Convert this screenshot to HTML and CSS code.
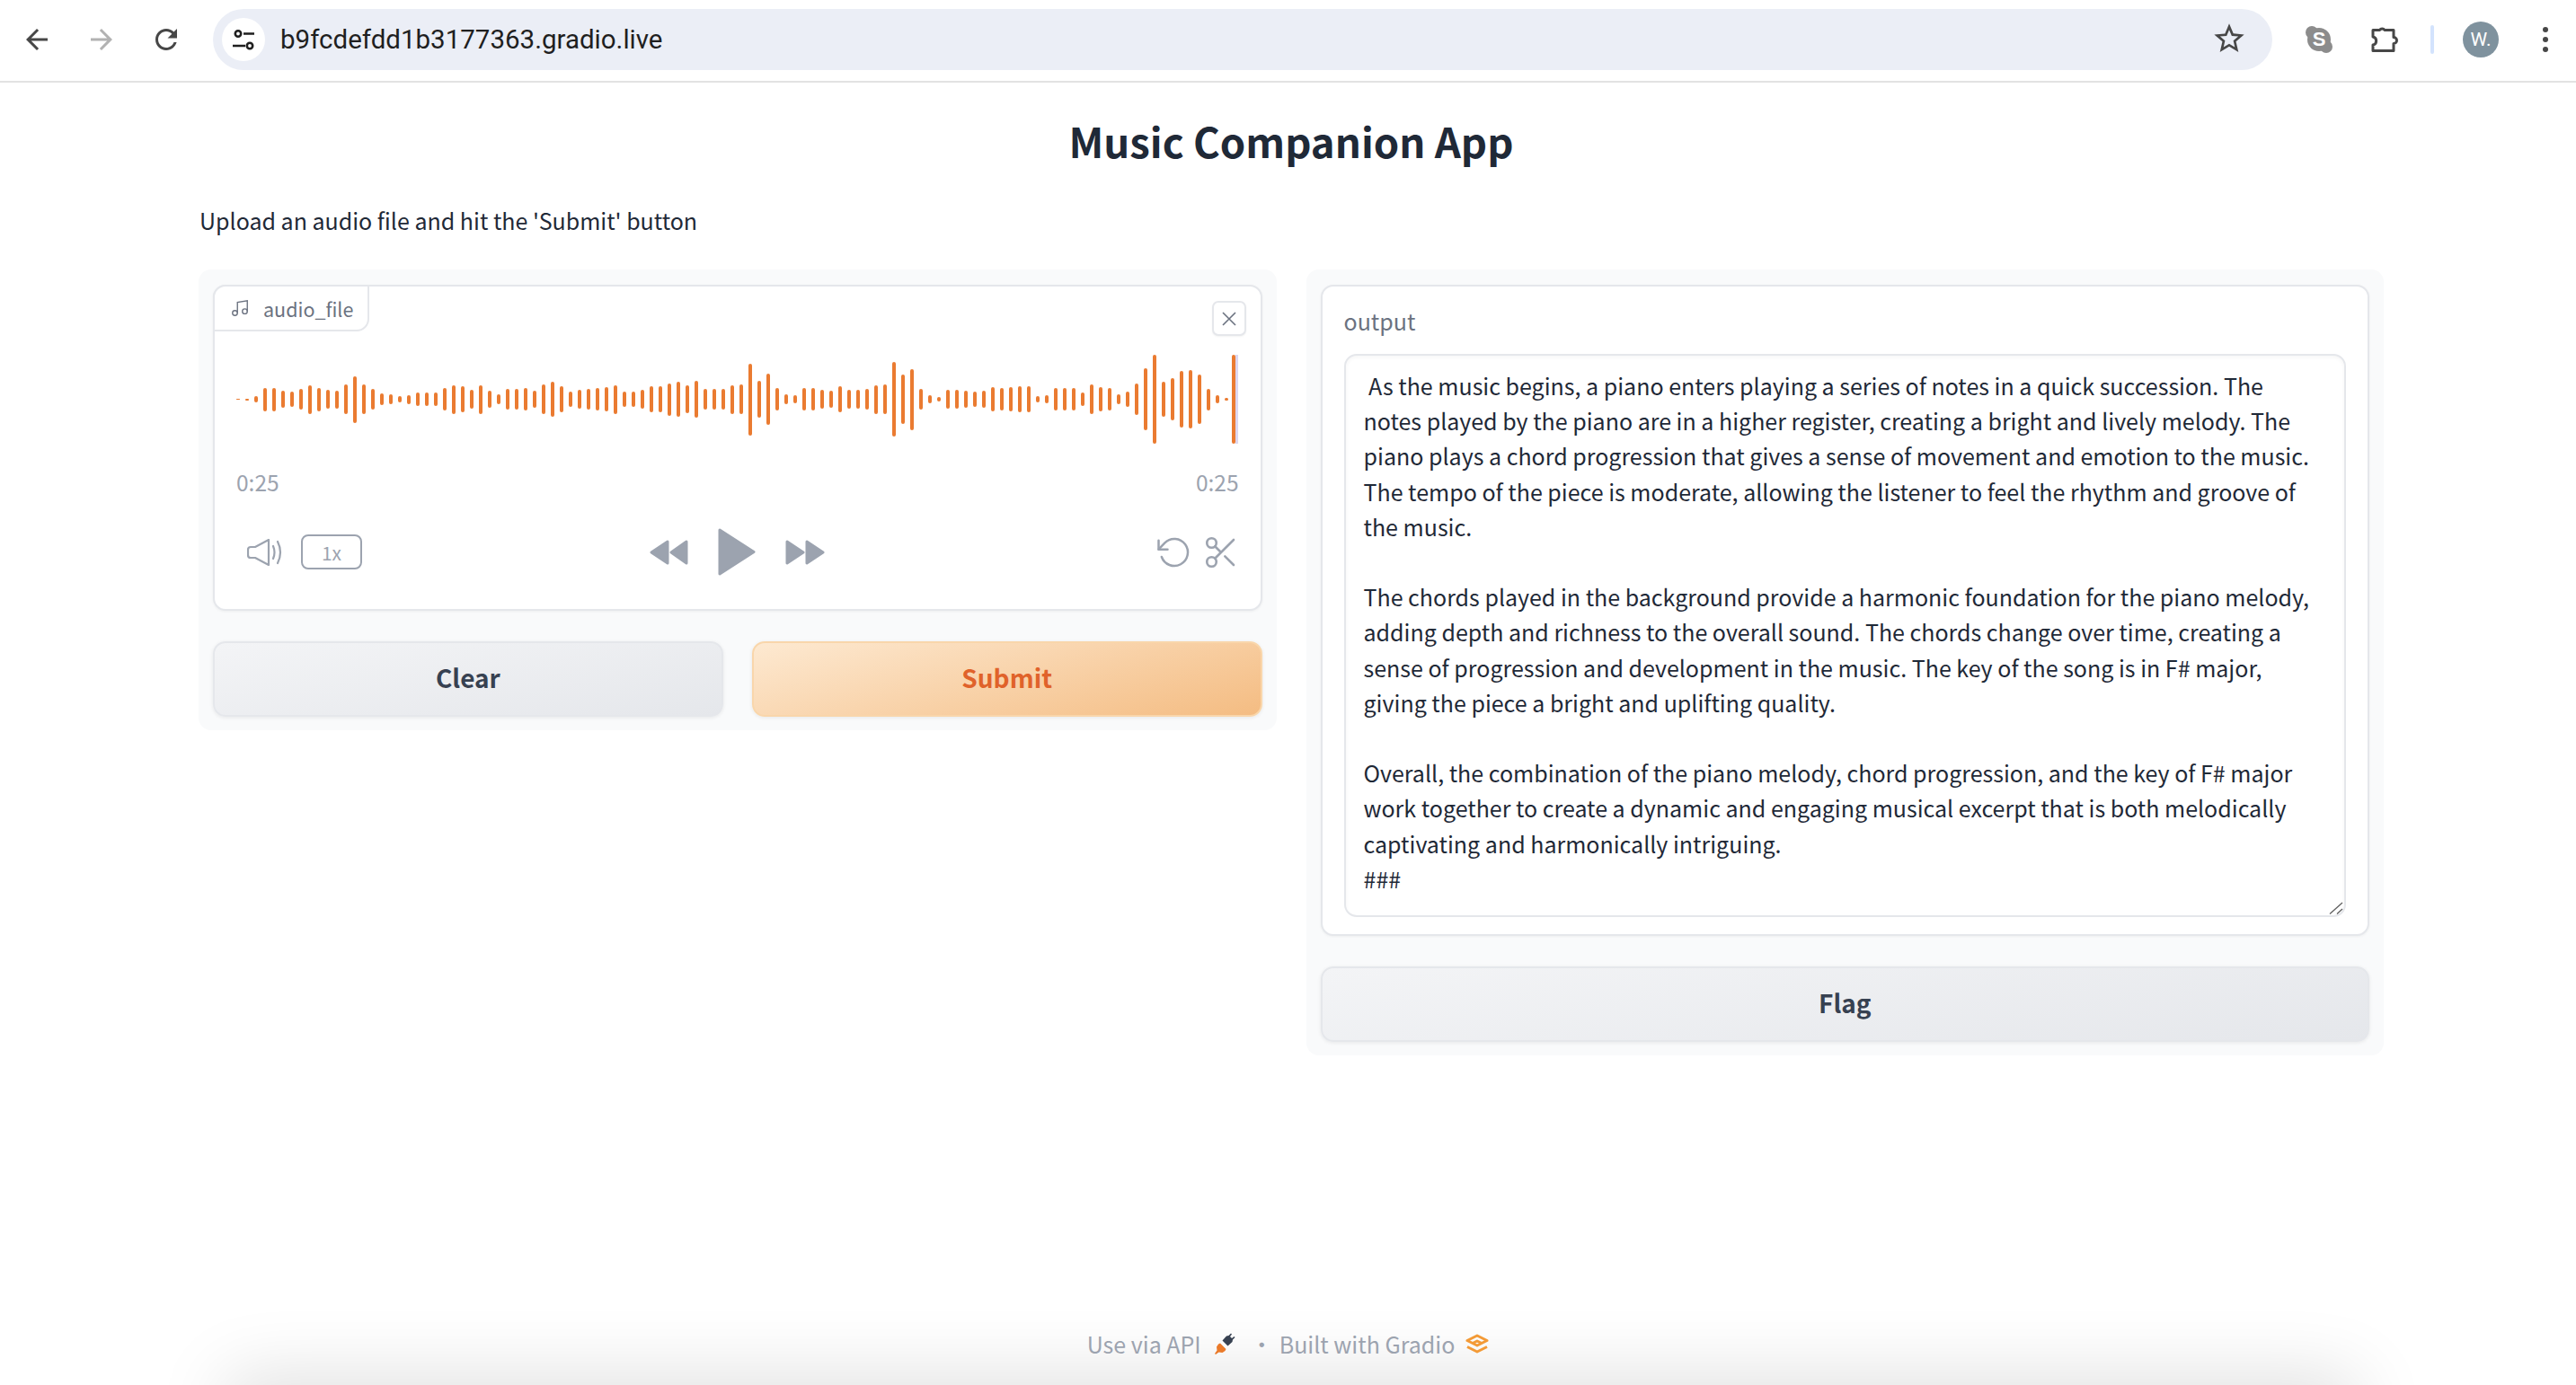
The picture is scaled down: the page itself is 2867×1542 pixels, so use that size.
FILE: index.html
```html
<!DOCTYPE html>
<html lang="en">
<head>
<meta charset="utf-8">
<title>Music Companion App</title>
<link rel="stylesheet" href="styles.css">
</head>
<body>
<header class="toolbar">
  <div class="nav">
    <svg class="nav-icon" viewBox="0 0 24 24"><path d="M20 11H7.83l5.59-5.59L12 4l-8 8 8 8 1.41-1.41L7.83 13H20v-2z"/></svg>
    <svg class="nav-icon disabled" viewBox="0 0 24 24"><path d="M4 11h12.17l-5.59-5.59L12 4l8 8-8 8-1.41-1.41L16.17 13H4v-2z"/></svg>
    <svg class="nav-icon" viewBox="0 0 24 24"><path d="M17.65 6.35C16.2 4.9 14.21 4 12 4c-4.42 0-7.99 3.58-7.99 8s3.57 8 7.99 8c3.73 0 6.84-2.55 7.73-6h-2.08c-.82 2.33-3.04 4-5.65 4-3.31 0-6-2.69-6-6s2.69-6 6-6c1.66 0 3.14.69 4.22 1.78L13 11h7V4l-2.35 2.35z"/></svg>
  </div>
  <div class="omnibox">
    <span class="site-info">
      <svg width="28" height="28" viewBox="0 0 28 28" fill="none" stroke="#1f1f1f" stroke-width="2.6"><circle cx="8" cy="7.5" r="3.2"/><path d="M14 7.5h12M2 21h14"/><circle cx="21" cy="21" r="3.2"/></svg>
    </span>
    <span class="url">b9fcdefdd1b3177363.gradio.live</span>
    <svg class="star" viewBox="0 0 24 24"><path d="M22 9.24l-7.19-.62L12 2 9.19 8.63 2 9.24l5.46 4.73L5.82 21 12 17.27 18.18 21l-1.63-7.03L22 9.24zM12 15.4l-3.76 2.27 1-4.28-3.32-2.88 4.38-.38L12 6.1l1.71 4.04 4.38.38-3.32 2.88 1 4.28L12 15.4z"/></svg>
  </div>
  <div class="extras">
    <svg class="skype" viewBox="0 0 32 32"><circle cx="16" cy="16" r="13"/><circle cx="8" cy="8" r="7"/><circle cx="24" cy="24" r="7"/><text x="16" y="23" text-anchor="middle">S</text></svg>
    <svg class="puzzle" viewBox="0 0 34 34" fill="none"><path d="M4 6.5h7.5a3.2 3.2 0 0 1 5.5 0H27v8a3.5 3.5 0 0 1 0 7v8H4v-6.5a4.6 4.6 0 0 0 0-9z"/></svg>
    <span class="divider"></span>
    <span class="avatar">W.</span>
    <span class="dots"><i></i><i></i><i></i></span>
  </div>
</header>

<main class="page">
  <h1 class="title">Music Companion App</h1>
  <p class="intro">Upload an audio file and hit the 'Submit' button</p>
  <div class="columns">
    <section class="panel">
      <div class="card audio">
        <div class="tab">
          <svg class="tab-icon" viewBox="0 0 24 24" fill="none"><path d="M9 18V5l12-2v13"/><circle cx="6" cy="18" r="3"/><circle cx="18" cy="16" r="3"/></svg>
          <span>audio_file</span>
        </div>
        <button class="close" type="button" aria-label="Clear">
          <svg width="16" height="16" viewBox="0 0 16 16" fill="none"><path d="M1 1l14 14M15 1L1 15"/></svg>
        </button>
        <div class="wave">
          <i style="height:1px"></i><i style="height:2px"></i><i style="height:7px"></i><i style="height:26px"></i><i style="height:26px"></i><i style="height:19px"></i><i style="height:17px"></i><i style="height:23px"></i><i style="height:32px"></i><i style="height:26px"></i><i style="height:21px"></i><i style="height:20px"></i><i style="height:33px"></i><i style="height:52px"></i><i style="height:33px"></i><i style="height:23px"></i><i style="height:13px"></i><i style="height:11px"></i><i style="height:7px"></i><i style="height:10px"></i><i style="height:15px"></i><i style="height:15px"></i><i style="height:15px"></i><i style="height:25px"></i><i style="height:32px"></i><i style="height:29px"></i><i style="height:21px"></i><i style="height:32px"></i><i style="height:19px"></i><i style="height:11px"></i><i style="height:23px"></i><i style="height:23px"></i><i style="height:25px"></i><i style="height:19px"></i><i style="height:33px"></i><i style="height:39px"></i><i style="height:29px"></i><i style="height:17px"></i><i style="height:21px"></i><i style="height:23px"></i><i style="height:25px"></i><i style="height:27px"></i><i style="height:32px"></i><i style="height:17px"></i><i style="height:17px"></i><i style="height:21px"></i><i style="height:29px"></i><i style="height:29px"></i><i style="height:36px"></i><i style="height:39px"></i><i style="height:31px"></i><i style="height:41px"></i><i style="height:23px"></i><i style="height:23px"></i><i style="height:23px"></i><i style="height:32px"></i><i style="height:33px"></i><i style="height:80px"></i><i style="height:41px"></i><i style="height:57px"></i><i style="height:25px"></i><i style="height:11px"></i><i style="height:9px"></i><i style="height:25px"></i><i style="height:25px"></i><i style="height:21px"></i><i style="height:19px"></i><i style="height:29px"></i><i style="height:21px"></i><i style="height:21px"></i><i style="height:23px"></i><i style="height:32px"></i><i style="height:33px"></i><i style="height:83px"></i><i style="height:55px"></i><i style="height:68px"></i><i style="height:23px"></i><i style="height:9px"></i><i style="height:5px"></i><i style="height:21px"></i><i style="height:21px"></i><i style="height:19px"></i><i style="height:17px"></i><i style="height:19px"></i><i style="height:27px"></i><i style="height:25px"></i><i style="height:27px"></i><i style="height:29px"></i><i style="height:29px"></i><i style="height:7px"></i><i style="height:9px"></i><i style="height:25px"></i><i style="height:25px"></i><i style="height:25px"></i><i style="height:15px"></i><i style="height:33px"></i><i style="height:27px"></i><i style="height:25px"></i><i style="height:11px"></i><i style="height:17px"></i><i style="height:35px"></i><i style="height:69px"></i><i style="height:99px"></i><i style="height:39px"></i><i style="height:47px"></i><i style="height:63px"></i><i style="height:65px"></i><i style="height:55px"></i><i style="height:24px"></i><i style="height:9px"></i><i style="height:3px"></i><i class="end" style="height:99px"></i><b class="cursor"></b>
        </div>
        <div class="times"><span>0:25</span><span>0:25</span></div>
        <div class="controls">
          <div class="ctl-left">
            <svg class="volume" width="40" height="30" viewBox="0 0 40 30" fill="none"><path d="M1 12v6q0 3 3 3h5l15 8V1L9 9H4q-3 0-3 3z"/><path d="M29 8q3 7 0 14"/><path d="M34 3q6 12 0 24"/></svg>
            <span class="rate">1x</span>
          </div>
          <div class="ctl-center">
            <svg width="43" height="28" viewBox="0 0 43 28" class="solid"><path d="M2 14L20 2v24zM24 14L41 2v24z"/></svg>
            <svg width="42" height="53" viewBox="0 0 42 53" class="solid"><path d="M2 2L40 26.500 2 51z"/></svg>
            <svg width="44" height="28" viewBox="0 0 44 28" class="solid"><path d="M2 2l18 12L2 26zM24 2l18 12-18 12z"/></svg>
          </div>
          <div class="ctl-right">
            <svg class="line" width="40" height="40" viewBox="0 0 24 24" fill="none"><path d="M1.500 4v6h6"/><path d="M3.510 15a9 9 0 1 0 2.130-9.360L1.500 10"/></svg>
            <svg class="line" width="42" height="42" viewBox="0 0 24 24" fill="none"><circle cx="6" cy="6" r="3"/><circle cx="6" cy="18" r="3"/><path d="M20 4L8.120 15.880M14.470 14.480L20 20M8.120 8.120L12 12"/></svg>
          </div>
        </div>
      </div>
      <div class="actions">
        <button class="btn" type="button">Clear</button>
        <button class="btn primary" type="button">Submit</button>
      </div>
    </section>

    <section class="panel">
      <div class="card output">
        <label class="out-label" for="out">output</label>
        <textarea id="out" class="out-text" wrap="off" readonly> As the music begins, a piano enters playing a series of notes in a quick succession. The
notes played by the piano are in a higher register, creating a bright and lively melody. The
piano plays a chord progression that gives a sense of movement and emotion to the music.
The tempo of the piece is moderate, allowing the listener to feel the rhythm and groove of
the music.

The chords played in the background provide a harmonic foundation for the piano melody,
adding depth and richness to the overall sound. The chords change over time, creating a
sense of progression and development in the music. The key of the song is in F# major,
giving the piece a bright and uplifting quality.

Overall, the combination of the piano melody, chord progression, and the key of F# major
work together to create a dynamic and engaging musical excerpt that is both melodically
captivating and harmonically intriguing.
###</textarea>
        <svg class="grip" width="16" height="14" viewBox="0 0 16 14" fill="none"><path d="M1 13.500L15 1M9 13.500L15 8"/></svg>
      </div>
      <button class="btn wide" type="button">Flag</button>
    </section>
  </div>
</main>

<footer class="footer">
  <span>Use via API</span>
  <svg class="plug" width="24" height="24" viewBox="0 0 24 24"><path fill="#374151" d="M9.500 8.500L14 3.500l2.500-.5L19 .5l1 1-2 2.500 2 2 2.500-2 1 1-2.500 2.500-.5 2.500-5 4.500z"/><path fill="#ea7a2a" d="M1 23l2.500-3.500L3 15.500l2-3 2-1 6.500 6.500-1 2-3 2-4-.5L2 24z"/></svg>
  <span class="sep">·</span>
  <span>Built with Gradio</span>
  <svg class="logo" width="26" height="22" viewBox="0 0 26 22" fill="none"><path d="M13 2l11 5.500L13 13 2 7.500z"/><path d="M2 14.500L13 20l11-5.500"/><path d="M8 10.500l5-2.500 5 2.500"/></svg>
</footer>
<div class="bottom-glow"></div>
</body>
</html>
```
FILE: styles.css
```css
* { box-sizing: border-box; }
html, body { margin: 0; height: 100%; overflow: hidden; background: #fff; }
body {
  display: flex;
  flex-direction: column;
  position: relative;
  font-family: "Noto Sans CJK SC", "Noto Sans", sans-serif;
  color: #1f2937;
}

/* browser toolbar */
.toolbar {
  height: 92px;
  flex: none;
  display: flex;
  align-items: flex-start;
  border-bottom: 2px solid #e2e2e2;
  padding-top: 10px;
  font-family: Roboto, sans-serif;
}
.nav {
  width: 237px;
  height: 68px;
  padding-left: 23px;
  display: flex;
  align-items: center;
  gap: 36px;
}
.nav-icon { width: 36px; height: 36px; fill: #474747; }
.nav-icon.disabled { fill: #b2b2b2; }
.omnibox {
  width: 2292px;
  height: 68px;
  border-radius: 34px;
  background: #ebeef6;
  display: flex;
  align-items: center;
  padding: 0 28px 0 10px;
}
.site-info {
  width: 48px;
  height: 48px;
  border-radius: 50%;
  background: #fff;
  display: flex;
  align-items: center;
  justify-content: center;
}
.url { margin-left: 17px; font-size: 29.500px; color: #1f1f1f; flex: 1; }
.star { width: 40px; height: 40px; fill: #474747; margin-top: -2px; }
.extras {
  flex: 1;
  height: 68px;
  display: flex;
  align-items: center;
  padding-left: 36px;
}
.skype { width: 32px; height: 32px; fill: #8c8c8c; }
.skype text { font: 700 22px "Liberation Sans", sans-serif; fill: #fff; }
.puzzle { width: 34px; height: 34px; margin-left: 40px; }
.puzzle path { stroke: #474747; stroke-width: 3; stroke-linejoin: round; }
.divider { width: 4px; height: 32px; border-radius: 2px; background: #d3e3fd; margin-left: 34px; }
.avatar {
  width: 40px;
  height: 40px;
  border-radius: 50%;
  background: #7f929e;
  color: #fff;
  font-size: 21px;
  display: flex;
  align-items: center;
  justify-content: center;
  margin-left: 32px;
}
.dots { display: flex; flex-direction: column; gap: 5px; margin-left: 49px; }
.dots i { width: 6px; height: 6px; border-radius: 50%; background: #474747; }

/* gradio page */
.page { padding: 30px 0 0 221px; width: 2653px; flex: 1; }
.title {
  margin: 0;
  font-size: 45.500px;
  line-height: 68px;
  font-weight: 700;
  text-align: center;
  color: #1f2937;
}
.intro { margin: 36px 0 35px 1px; font-size: 25px; line-height: 39px; color: #1f2937; }
.columns { display: flex; align-items: flex-start; gap: 33px; }
.panel {
  flex: 1 1 0;
  min-width: 0;
  background: #f9fafb;
  border-radius: 14px;
  padding: 17px 16px 15px;
  display: flex;
  flex-direction: column;
  gap: 34px;
}
.card {
  position: relative;
  background: #fff;
  border: 2px solid #e5e7eb;
  border-radius: 14px;
  box-shadow: 0 1px 3px rgba(0, 0, 0, .05);
}

/* audio card */
.audio { height: 363px; padding: 76px 24px 0 24px; }
.tab {
  position: absolute;
  left: -2px;
  top: -2px;
  width: 174px;
  height: 52px;
  display: flex;
  align-items: center;
  gap: 15px;
  padding-left: 17px;
  background: #fff;
  border: 2px solid #e5e7eb;
  border-radius: 14px 0 14px 0;
  font-size: 21.500px;
  color: #6b7280;
}
.tab-icon { width: 22px; height: 22px; }
.tab-icon path, .tab-icon circle { stroke: #6b7280; stroke-width: 1.500; }
.close {
  position: absolute;
  right: 16px;
  top: 16px;
  width: 38px;
  height: 39px;
  padding: 0;
  background: #fff;
  border: 2px solid #e5e7eb;
  border-radius: 7px;
  display: flex;
  align-items: center;
  justify-content: center;
  box-shadow: 0 1px 2px rgba(0, 0, 0, .05);
}
.close path { stroke: #6b7280; stroke-width: 1.600; }
.wave {
  position: relative;
  height: 99px;
  display: flex;
  align-items: center;
  gap: 6px;
}
.wave i { width: 4px; background: #ea7b31; border-radius: 2px; flex: none; }
.wave i.end { margin-left: -2px; }
.cursor { width: 3px; height: 99px; margin-left: -6px; background: #dcd6ef; flex: none; }
.times {
  display: flex;
  justify-content: space-between;
  margin-top: 26px;
  font-size: 24.500px;
  line-height: 34px;
  color: #9ca3af;
}
.controls {
  display: grid;
  grid-template-columns: 1fr auto 1fr;
  align-items: center;
  height: 53px;
  margin: 34px 1px 0 0;
}
.ctl-left { display: flex; align-items: center; gap: 20px; padding-left: 12px; }
.volume path { stroke: #9ca3af; stroke-width: 2.200; stroke-linejoin: round; stroke-linecap: round; }
.rate {
  width: 68px;
  height: 39px;
  border: 2.500px solid #9ca3af;
  border-radius: 8px;
  display: flex;
  align-items: center;
  justify-content: center;
  font-size: 21px;
  color: #9ca3af;
}
.ctl-center { display: flex; align-items: center; gap: 33px; }
.solid path { fill: #9ca3af; stroke: #9ca3af; stroke-width: 3; stroke-linejoin: round; }
.ctl-right { display: flex; align-items: center; justify-content: flex-end; gap: 11px; margin-right: -2px; }
.line path, .line circle { stroke: #9ca3af; stroke-width: 1.500; stroke-linecap: round; stroke-linejoin: round; }

/* buttons */
.actions { display: flex; gap: 32px; }
.btn {
  flex: 1 1 0;
  min-width: 0;
  height: 84px;
  padding: 0 0 4px;
  font: 600 28px/1 "Noto Sans CJK SC", "Noto Sans", sans-serif;
  color: #374151;
  background: linear-gradient(170deg, #f3f4f6, #e5e7eb);
  border: 2px solid #e5e7eb;
  border-radius: 14px;
  box-shadow: 0 1px 4px rgba(0, 0, 0, .08);
}
.btn.primary {
  color: #e0622a;
  background: linear-gradient(165deg, #fde9d1, #f4bc82);
  border-color: #f9d6ab;
}
.btn.wide { flex: none; width: 100%; }

/* output */
.output { height: 725px; padding: 19px 24px 19px; display: flex; flex-direction: column; }
.out-label { display: block; font-size: 25px; line-height: 39px; color: #6b7280; margin-bottom: 17px; }
.out-text {
  display: block;
  width: 100%;
  flex: 1;
  padding: 14px 20px;
  border: 2px solid #e5e7eb;
  border-radius: 14px;
  background: #fff;
  color: #1f2937;
  font: 400 25px/39.200px "Noto Sans CJK SC", "Noto Sans", sans-serif;
  box-shadow: inset 0 2px 4px rgba(0, 0, 0, .04);
  overflow: hidden;
  resize: none;
  outline: none;
}
.grip { position: absolute; right: 27px; bottom: 22px; }
.grip path { stroke: #5f5f5f; stroke-width: 1.300; }

/* footer */
.footer {
  flex: none;
  height: 40px;
  margin-bottom: 26px;
  display: flex;
  align-items: center;
  justify-content: center;
  font-size: 25px;
  color: #9ca3af;
  position: relative;
  z-index: 1;
}
.plug { margin-left: 14px; }
.sep { margin: 0 7px 0 17px; }
.logo { margin-left: 12px; }
.logo path { stroke: #f39a36; stroke-width: 3; stroke-linejoin: round; }
.bottom-glow {
  position: absolute;
  left: 262px;
  right: 254px;
  bottom: -60px;
  height: 60px;
  box-shadow: 0 0 80px 10px rgba(0, 0, 0, .13);
}
```
